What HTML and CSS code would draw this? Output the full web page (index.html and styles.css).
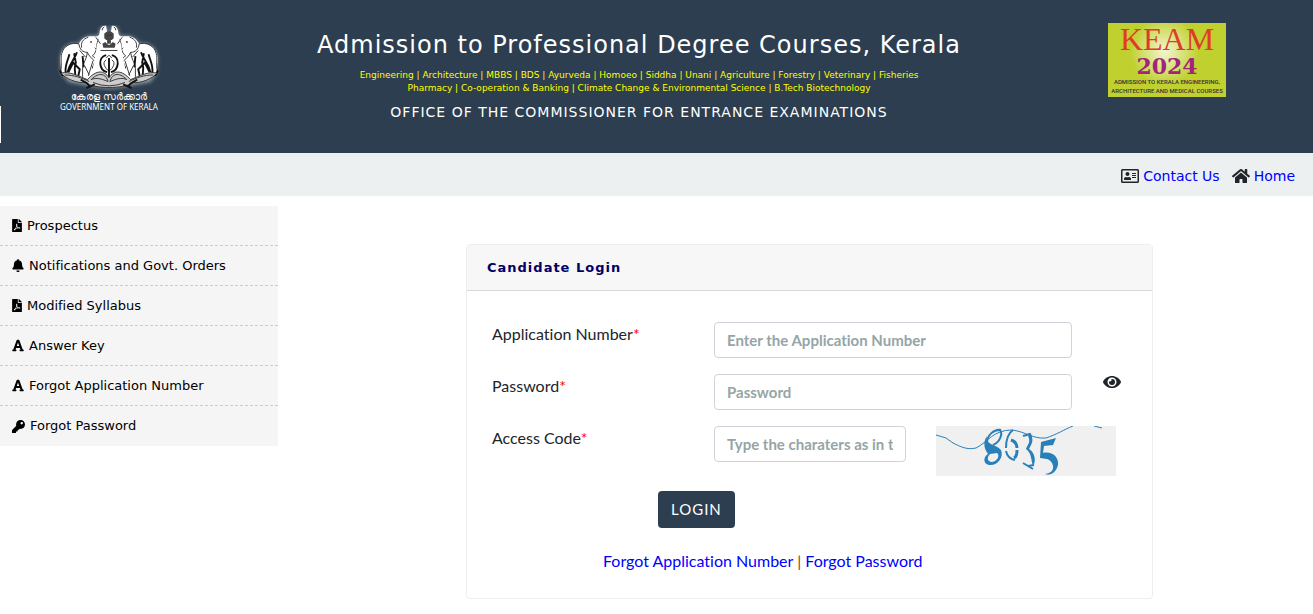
FILE: index.html
```html
<!DOCTYPE html>
<html lang="en">
<head>
<meta charset="utf-8">
<meta name="viewport" content="width=device-width, initial-scale=1">
<title>Candidate Login - CEE Kerala</title>
<link rel="stylesheet" href="styles.css">
</head>
<body>
<svg class="sprite" aria-hidden="true">
  <symbol id="i-pdf" viewBox="0 0 384 512"><path d="M181.900 256.100c-5-16-4.900-46.900-2-46.900 8.400 0 7.600 36.900 2 46.900zm-1.700 47.200c-7.700 20.200-17.300 43.300-28.400 62.700 18.300-7 39-17.200 62.900-21.900-12.700-9.600-24.900-23.400-34.500-40.800zM86.100 428.100c0 .8 13.200-5.400 34.900-40.200-6.700 6.300-29.100 24.500-34.900 40.200zM248 160h136v328c0 13.300-10.700 24-24 24H24c-13.300 0-24-10.700-24-24V24C0 10.700 10.700 0 24 0h200v136c0 13.200 10.800 24 24 24zm-8 171.800c-20-12.200-33.300-29-42.700-53.800 4.500-18.500 11.600-46.600 6.200-64.200-4.700-29.400-42.400-26.500-47.800-6.800-5 18.300-.4 44.100 8.100 77-11.600 27.600-28.700 64.600-40.800 85.800-.1 0-.1.1-.2.1-27.100 13.900-73.600 44.500-54.500 68 5.600 6.900 16 10 21.500 10 17.900 0 35.700-18 61.100-61.800 25.800-8.500 54.100-19.100 79-23.200 21.700 11.800 47.100 19.500 64 19.500 29.200 0 31.200-32 19.700-43.400-13.900-13.600-54.300-9.700-73.600-7.200zM377 105L279 7c-4.500-4.500-10.600-7-17-7h-6v128h128v-6.100c0-6.300-2.500-12.400-7-16.900zm-74.100 255.300c4.100-2.700-2.500-11.900-42.800-9 37.100 15.800 42.800 9 42.800 9z"/></symbol>
  <symbol id="i-bell" viewBox="0 0 448 512"><path d="M224 512c35.320 0 63.970-28.650 63.970-64H160.030c0 35.350 28.650 64 63.970 64zm215.390-149.710c-19.320-20.760-55.470-51.990-55.470-154.290 0-77.700-54.480-139.900-127.940-155.160V32c0-17.670-14.320-32-31.980-32s-31.980 14.330-31.980 32v20.840C118.560 68.100 64.080 130.300 64.080 208c0 102.300-36.150 133.530-55.470 154.290-6 6.450-8.660 14.160-8.610 21.710.11 16.400 12.980 32 32.100 32h383.800c19.120 0 32-15.600 32.100-32 .05-7.550-2.610-15.270-8.610-21.710z"/></symbol>
  <symbol id="i-font" viewBox="0 0 448 512"><path d="M432 416h-23.410L277.880 53.690A32 32 0 0 0 247.580 32h-47.160a32 32 0 0 0-30.300 21.690L39.410 416H16a16 16 0 0 0-16 16v32a16 16 0 0 0 16 16h128a16 16 0 0 0 16-16v-32a16 16 0 0 0-16-16h-19.580l23.300-64h152.560l23.300 64H304a16 16 0 0 0-16 16v32a16 16 0 0 0 16 16h128a16 16 0 0 0 16-16v-32a16 16 0 0 0-16-16zM176.850 272L224 142.510 271.150 272z"/></symbol>
  <symbol id="i-key" viewBox="0 0 512 512"><path d="M512 176c0 97.200-78.800 176-176 176-11.220 0-22.190-1.060-32.830-3.070l-24.010 27.010A24 24 0 0 1 261.220 384H224v40c0 13.260-10.740 24-24 24h-40v40c0 13.260-10.740 24-24 24H24c-13.260 0-24-10.740-24-24v-78.060c0-6.360 2.530-12.470 7.030-16.970l161.800-161.800C163.110 213.810 160 195.270 160 176 160 78.800 238.800 0 336 0c97.490 0 176 78.510 176 176zM336 128c0 26.510 21.490 48 48 48s48-21.490 48-48-21.490-48-48-48-48 21.490-48 48z"/></symbol>
  <symbol id="i-card" viewBox="0 0 576 512"><path d="M528 32H48C21.500 32 0 53.500 0 80v352c0 26.500 21.500 48 48 48h480c26.500 0 48-21.500 48-48V80c0-26.500-21.500-48-48-48zm0 400H48V80h480v352zM208 256c35.300 0 64-28.700 64-64s-28.700-64-64-64-64 28.700-64 64 28.700 64 64 64zm-89.600 128h179.200c12.400 0 22.400-8.600 22.400-19.200v-19.200c0-31.800-30.100-57.600-67.200-57.600-10.800 0-18.700 8-44.800 8-26.900 0-33.400-8-44.800-8-37.100 0-67.200 25.800-67.200 57.600v19.200c0 10.600 10 19.200 22.400 19.200zM360 320h112c4.400 0 8-3.600 8-8v-16c0-4.400-3.600-8-8-8H360c-4.400 0-8 3.600-8 8v16c0 4.400 3.600 8 8 8zm0-64h112c4.400 0 8-3.600 8-8v-16c0-4.400-3.600-8-8-8H360c-4.400 0-8 3.600-8 8v16c0 4.400 3.600 8 8 8zm0-64h112c4.400 0 8-3.600 8-8v-16c0-4.400-3.600-8-8-8H360c-4.400 0-8 3.600-8 8v16c0 4.400 3.600 8 8 8z"/></symbol>
  <symbol id="i-home" viewBox="0 0 576 512"><path d="M280.370 148.260L96 300.110V464a16 16 0 0 0 16 16l112.060-.29a16 16 0 0 0 15.920-16V368a16 16 0 0 1 16-16h64a16 16 0 0 1 16 16v95.640a16 16 0 0 0 16 16.050L464 480a16 16 0 0 0 16-16V300L295.670 148.260a12.190 12.190 0 0 0-15.300 0zM571.600 251.470L488 182.560V44.050a12 12 0 0 0-12-12h-56a12 12 0 0 0-12 12v72.610L318.470 43a48 48 0 0 0-61 0L4.340 251.470a12 12 0 0 0-1.600 16.900l25.500 31A12 12 0 0 0 45.150 301l235.220-193.740a12.190 12.190 0 0 1 15.300 0L530.900 301a12 12 0 0 0 16.900-1.600l25.500-31a12 12 0 0 0-1.700-16.930z"/></symbol>
  <symbol id="i-eye" viewBox="0 0 576 512"><path d="M572.520 241.400C518.290 135.590 410.930 64 288 64S57.680 135.640 3.480 241.410a32.350 32.350 0 0 0 0 29.190C57.710 376.410 165.070 448 288 448s230.320-71.640 284.520-177.410a32.350 32.350 0 0 0 0-29.190zM288 400a144 144 0 1 1 144-144 143.930 143.930 0 0 1-144 144zm0-240a95.310 95.310 0 0 0-25.310 3.790 47.850 47.850 0 0 1-66.900 66.900A95.780 95.780 0 1 0 288 160z"/></symbol>
</svg>

<header class="banner">
  <div class="emblem">
    <svg class="emblem-art" viewBox="0 0 110 70" role="img" aria-label="Government of Kerala emblem">
      <defs>
        <filter id="glow" x="-10%" y="-10%" width="120%" height="120%"><feGaussianBlur stdDeviation="2"/></filter>
        <g id="elephant">
          <path class="hide" d="M52 1C48 0 45 4 45 9C44 13 41 12 37 12C31 11 26 14 23 20C14 18 6 23 4 31C2 38 5 44 4 52L17 56L30 57L48 60L54 50L54 14Z"/>
          <path class="line" d="M50 2C46 4 49 10 45 14C42 18 42 21 42 24C41 29 39 32 37 33M23 20C24 26 27 29 32 29M23 20C15 18 7 22 5 30C3 36 6 43 3 52M33 13C27 15 25 19 26 24M32 29C31 37 28 39 27 45L27 55M32 29C36 37 42 38 47 48M24 27L30 34M40 24C45 30 49 31 51 35M38 33L49 44M29 43L34 53M38 38L33 54"/>
          <path class="line bold" d="M21 29C19 36 14 39 11 50M18 30L20 41M13 31C11 39 8 43 9 51M20 41C17 45 20 50 19 54M12 50L17 40L24 47L22 56M27 33L28 45M44 31L38 45L42 53M3 48L6 54"/>
          <circle class="dot" cx="36" cy="18" r="1"/>
        </g>
      </defs>
      <g class="halo" filter="url(#glow)"><use href="#elephant"/><use href="#elephant" transform="matrix(-1 0 0 1 110 0)"/><path d="M4 49L55 66L106 49L99 60L55 68L12 60Z"/></g>
      <use href="#elephant"/><use href="#elephant" transform="matrix(-1 0 0 1 110 0)"/>
      <path class="hide" d="M47 5L55 10L63 5L68 22L69 30L74 54L36 54L41 30L42 22Z"/>
      <path class="pillar" d="M50 9Q55 4 60 9L60 14L58 16H52L50 14ZM53 16H57V20H53ZM48 20L51 18L54 21L56 21L59 18L62 20L61 24H49Z"/>
      <path class="line" d="M52 11H58M46 27H64M52 37C47 40 51 46 55 49C59 46 63 40 58 37M52 35L55 32L58 35M41 13L46 20M69 13L64 20"/>
      <path class="line bold" d="M52 32C43 34 44 48 53 50M58 32C67 34 66 48 57 50M55 35V55M52 55H58"/>
      <path class="scroll" d="M4 51C13 49 23 54 32 58C42 47 50 48 55 56C60 48 68 47 78 58C87 54 97 49 106 51C101 57 89 62 80 61C72 68 38 68 30 61C21 62 9 57 4 51Z"/>
      <path class="line" d="M8 53C18 53 26 56 34 60M102 53C92 53 84 56 76 60M36 58C45 49 52 52 54 60C45 56 40 56 36 58M74 58C65 49 58 52 56 60C65 56 70 56 74 58M38 61Q55 68 72 61"/>
      <path class="line bold" d="M25 58L32 62L35 66M85 58L78 62L75 66M31 67L40 63M79 67L70 63"/>
    </svg>
    <span class="emblem-ml" lang="ml">കേരള സർക്കാർ</span>
    <span class="emblem-en">GOVERNMENT OF KERALA</span>
  </div>
  <div class="heading">
    <h1>Admission to Professional Degree Courses, Kerala</h1>
    <p class="courses">Engineering | Architecture | MBBS | BDS | Ayurveda | Homoeo | Siddha | Unani | Agriculture | Forestry | Veterinary | Fisheries<br>Pharmacy | Co-operation &amp; Banking | Climate Change &amp; Environmental Science | B.Tech Biotechnology</p>
    <p class="office">OFFICE OF THE COMMISSIONER FOR ENTRANCE EXAMINATIONS</p>
  </div>
  <div class="keam">
    <span class="keam-name">KEAM</span>
    <span class="keam-year">2024</span>
    <span class="keam-note">ADMISSION TO KERALA ENGINEERING,<br>ARCHITECTURE AND MEDICAL COURSES</span>
  </div>
  <span class="edge-mark"></span>
</header>

<nav class="topnav" aria-label="Top">
  <span class="toplink"><svg class="icon-wide"><use href="#i-card"/></svg><a href="#">Contact Us</a></span>
  <span class="toplink"><svg class="icon-wide"><use href="#i-home"/></svg><a href="#">Home</a></span>
</nav>

<div class="page">
  <nav class="sidebar" aria-label="Links">
    <a href="#"><svg class="w10"><use href="#i-pdf"/></svg>Prospectus</a>
    <a href="#"><svg class="w12"><use href="#i-bell"/></svg>Notifications and Govt. Orders</a>
    <a href="#"><svg class="w10"><use href="#i-pdf"/></svg>Modified Syllabus</a>
    <a href="#"><svg class="w12"><use href="#i-font"/></svg>Answer Key</a>
    <a href="#"><svg class="w12"><use href="#i-font"/></svg>Forgot Application Number</a>
    <a href="#"><svg class="w13"><use href="#i-key"/></svg>Forgot Password</a>
  </nav>

  <main class="content">
    <section class="card">
      <h2>Candidate Login</h2>
      <form class="login">
        <div class="row">
          <label for="appno">Application Number<span class="req">*</span></label>
          <input id="appno" type="text" placeholder="Enter the Application Number">
        </div>
        <div class="row">
          <label for="pwd">Password<span class="req">*</span></label>
          <input id="pwd" type="password" placeholder="Password">
          <button class="reveal" type="button" aria-label="Show password"><svg class="icon-wide"><use href="#i-eye"/></svg></button>
        </div>
        <div class="row code-row">
          <label for="code">Access Code<span class="req">*</span></label>
          <input id="code" type="text" placeholder="Type the charaters as in the image">
          <svg class="captcha" viewBox="0 0 180 50" role="img" aria-label="Access code 8035">
            <path class="thin" d="M0 9L10 12L17 17C25 21 31 24 40 22C52 16 57 4 76 4C91 6 96 13 110 12C122 8 127 4 137 0M158 0L166 2"/>
            <path class="mid" d="M65 4C58 3 51 9 51 17M64 4C67 8 64 16 57 19"/>
            <path class="fill" d="M51 10C49 19 60 18 65 24C68 31 62 40 53 39C47 38 47 31 52 28C49 24 46 17 51 10ZM54 28C50 32 52 36 56 36C62 35 64 29 61 27Z"/>
            <path class="mid" d="M77 4C71 8 70 15 70 22M70 25C71 30 74 33 79 34"/>
            <path class="thick" d="M75 14C81 16 81 20 81 22M81 24C81 28 80 31 78 32"/>
            <path class="mid" d="M87 10L94 8C98 14 92 20 91 23M87 37L97 43M92 40L98 39"/>
            <path class="fill" d="M94 8C99 14 95 19 93 23C98 26 101 34 97 40C95 35 96 27 90 23C94 18 94 14 92 10Z"/>
            <path class="fill" d="M105 16L120 12L117 19L108 20L107 27C116 25 123 31 122 39C120 47 114 50 109 48C116 47 119 43 116 37C113 32 109 33 104 32Z"/>
          </svg>
        </div>
        <div class="actions"><button class="submit" type="submit">LOGIN</button></div>
        <p class="help"><a href="#">Forgot Application Number</a> <span class="bar">|</span> <a href="#">Forgot Password</a></p>
      </form>
    </section>
  </main>
</div>
</body>
</html>
```

FILE: styles.css
```css
* { box-sizing: border-box; }

body {
  margin: 0;
  background: #fff;
  color: #212529;
  font-family: Lato, sans-serif;
  font-size: 16px;
  font-variant-ligatures: none;
  line-height: 24px;
}

h1, h2, p { margin: 0; font-weight: 400; }
a { color: #00f; text-decoration: none; }
svg { display: block; fill: currentColor; }
.sprite { position: absolute; width: 0; height: 0; }

.banner, .topnav, .sidebar, .card h2 { font-family: Verdana, "DejaVu Sans", sans-serif; }

/* Banner */
.banner {
  position: relative;
  display: grid;
  grid-template-columns: 102px 1fr 118px;
  align-items: start;
  min-height: 153px;
  padding: 23px 87px 0 58px;
  background: #2c3e50;
  color: #fff;
}

.edge-mark {
  position: absolute;
  left: 0;
  top: 106px;
  width: 1px;
  height: 37px;
  background: #fff;
}

.emblem {
  display: flex;
  flex-direction: column;
  align-items: center;
  padding-top: 2px;
  white-space: nowrap;
}
.emblem-art { width: 108px; height: 66px; }
.emblem-ml { font-size: 10px; line-height: 11px; }
.emblem-en { font-family: "Noto Sans", sans-serif; font-size: 8px; line-height: 10px; }
.hide { fill: #fff; }
.halo { fill: #fff; opacity: .6; }
.line { fill: none; stroke: #333; stroke-width: 1; }
.line.bold { stroke: #111; stroke-width: 2; }
.dot, .pillar { fill: #444; }
.scroll { fill: #ccc; stroke: #333; }

.heading { padding: 6px 0 0 10px; text-align: center; }
.heading h1 { font-size: 24px; line-height: 32px; letter-spacing: 1px; }
.courses {
  padding-top: 8px;
  color: #ff0;
  font-size: 9px;
  line-height: 13px;
}
.office { padding-top: 5px; font-size: 14px; line-height: 24px; letter-spacing: 1px; }

.keam {
  display: flex;
  flex-direction: column;
  align-items: center;
  min-height: 74px;
  background: radial-gradient(circle at 48% 38%, #f4f6d0 0, #bfd02f 45%);
  white-space: nowrap;
}
.keam-name { color: #e03a2c; font-family: "Liberation Serif", serif; font-size: 32px; line-height: 32px; }
.keam-year { color: #a0257c; font-family: "DejaVu Serif", serif; font-size: 22px; font-weight: 700; line-height: 22px; }
.keam-note { color: #333; font-family: Roboto, sans-serif; font-size: 6px; font-weight: 500; line-height: 9px; text-align: center; }

/* Contact bar */
.topnav {
  display: flex;
  justify-content: flex-end;
  gap: 12px;
  min-height: 43px;
  padding: 2px 18px 0;
  background: #ecf0f1;
  font-size: 14px;
}
.toplink { display: flex; align-items: center; gap: 4px; }
.icon-wide { width: 18px; height: 16px; }

/* Page columns */
.page {
  display: grid;
  grid-template-columns: 278px 1fr;
  align-items: start;
  padding-top: 10px;
}

.sidebar { background: #f5f5f5; font-size: 13px; }
.sidebar a {
  display: flex;
  align-items: center;
  gap: 5px;
  min-height: 40px;
  padding-left: 12px;
  border-bottom: 1px dashed #ccc;
  color: #000;
}
.sidebar a:last-child { border-bottom: 0; }
.sidebar svg { height: 13px; }
.w10 { width: 10px; }
.w12 { width: 12px; }
.w13 { width: 13px; }

.content { padding: 38px 160px 15px 188px; }

.card { border: 1px solid #eee; border-radius: 4px; }
.card h2 {
  padding: 11px 20px 10px;
  border-bottom: 1px solid #d9d9d9;
  background: #f7f7f7;
  color: #006;
  font-size: 13px;
  font-weight: 700;
  letter-spacing: 1px;
}

.login { padding: 31px 31px 25px 25px; }
.row {
  display: grid;
  grid-template-columns: 222px 358px 1fr;
  align-items: start;
  min-height: 52px;
}
.row input {
  width: 100%;
  height: 36px;
  padding: 0 12px;
  border: 1px solid #ced4da;
  border-radius: 4px;
  background: #fff;
  font: 700 15px/22px Lato, sans-serif;
  font-variant-ligatures: none;
}
.row input::placeholder { color: #95a5a6; opacity: 1; }
.req { color: #f00; }
.reveal { justify-self: end; padding: 0; border: 0; background: none; color: #212529; }
.code-row { grid-template-columns: 222px 192px 210px; }
.captcha { width: 180px; height: 50px; margin-left: 30px; background: #f0f0f0; }
.thin, .thick, .mid { fill: none; stroke: #2980b9; }
.thin { stroke-width: 1; }
.mid { stroke-width: 2; }
.thick { stroke-width: 3; }
.fill { fill: #2980b9; fill-rule: evenodd; }

.actions { padding: 13px 0 0 166px; }
.submit {
  padding: 6px 13px;
  border: 0;
  border-radius: 4px;
  background: #2c3e50;
  color: #fff;
  font: 400 15px/25px Lato, sans-serif;
  letter-spacing: 1px;
}
.help { padding: 21px 0 0 111px; }
.bar { color: #8b4513; }
```
